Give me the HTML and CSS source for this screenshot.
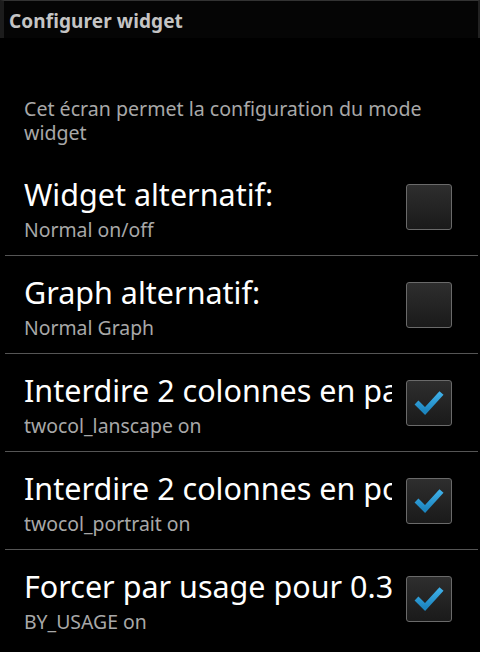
FILE: index.html
```html
<!DOCTYPE html>
<html>
<head>
<meta charset="utf-8">
<link rel="stylesheet" href="styles.css">
</head>
<body>
<div class="titlebar"><span class="title">Configurer widget</span></div>
<div class="list">
  <div class="desc">Cet écran permet la configuration du mode widget</div>
  <div class="row">
    <div class="texts"><div class="rtitle">Widget alternatif:</div><div class="sum">Normal on/off</div></div>
    <div class="cb"></div>
  </div>
  <div class="sep"></div>
  <div class="row">
    <div class="texts"><div class="rtitle">Graph alternatif:</div><div class="sum">Normal Graph</div></div>
    <div class="cb"></div>
  </div>
  <div class="sep"></div>
  <div class="row">
    <div class="texts"><div class="rtitle">Interdire 2 colonnes en paysage</div><div class="sum">twocol_lanscape on</div></div>
    <div class="cb"><svg viewBox="0 0 45 45" width="45" height="45"><defs><linearGradient id="g1" x1="0" y1="0" x2="0" y2="1"><stop offset="0" stop-color="#3fb0e8"/><stop offset="1" stop-color="#1d86c0"/></linearGradient></defs><path d="M10.5 22.5 L19 31 L35.5 13" fill="none" stroke="url(#g1)" stroke-width="5.5"/></svg></div>
  </div>
  <div class="sep"></div>
  <div class="row">
    <div class="texts"><div class="rtitle">Interdire 2 colonnes en portrait</div><div class="sum">twocol_portrait on</div></div>
    <div class="cb"><svg viewBox="0 0 45 45" width="45" height="45"><defs><linearGradient id="g2" x1="0" y1="0" x2="0" y2="1"><stop offset="0" stop-color="#3fb0e8"/><stop offset="1" stop-color="#1d86c0"/></linearGradient></defs><path d="M10.5 22.5 L19 31 L35.5 13" fill="none" stroke="url(#g2)" stroke-width="5.5"/></svg></div>
  </div>
  <div class="sep"></div>
  <div class="row">
    <div class="texts"><div class="rtitle">Forcer par usage pour 0.3 et plus</div><div class="sum">BY_USAGE on</div></div>
    <div class="cb"><svg viewBox="0 0 45 45" width="45" height="45"><defs><linearGradient id="g3" x1="0" y1="0" x2="0" y2="1"><stop offset="0" stop-color="#3fb0e8"/><stop offset="1" stop-color="#1d86c0"/></linearGradient></defs><path d="M10.5 22.5 L19 31 L35.5 13" fill="none" stroke="url(#g3)" stroke-width="5.5"/></svg></div>
  </div>
</div>
</body>
</html>
```
FILE: styles.css
```css
html, body {
  margin: 0;
  padding: 0;
  background: #000;
  width: 480px;
  height: 652px;
  overflow: hidden;
  font-family: "Noto Sans", "Open Sans", sans-serif;
}
.titlebar {
  background: #050505;
  border-top: 1px solid #333;
  border-left: 4px solid #1c1c1c;
  border-right: 2px solid #222;
  display: flex;
  align-items: center;
  padding-left: 5px;
  padding-top: 2px;
  box-sizing: border-box;
  height: 38px;
}
.title {
  color: #c4c4c4;
  font-weight: bold;
  font-size: 19px;
  letter-spacing: 0.1px;
}
.list {
  padding-top: 59px;
}
.desc {
  color: #a8a8a8;
  font-size: 19.6px;
  line-height: 24px;
  padding: 0 24px;
  height: 61px;
}
.row {
  height: 92px;
  padding-top: 5px;
  display: flex;
  align-items: center;
  padding-left: 24px;
}
.texts {
  width: 368px;
  margin-top: -2px;
  overflow: hidden;
  white-space: nowrap;
}
.rtitle {
  color: #fff;
  font-size: 30.5px;
  line-height: 42px;
  margin-bottom: 2px;
}
.sum {
  color: #a8a8a8;
  font-size: 19.4px;
  line-height: 26px;
}
.cb {
  margin-top: -5px;
  margin-left: 14px;
  width: 44px;
  height: 44px;
  border: 1px solid #6a6a6a;
  border-radius: 3px;
  background: linear-gradient(#2e2e2e, #1a1a1a);
  position: relative;
}
.cb svg {
  position: absolute;
  left: -1px;
  top: -1px;
}
.sep {
  height: 1px;
  background: #555;
  margin: 0 2px 0 5px;
}
```
